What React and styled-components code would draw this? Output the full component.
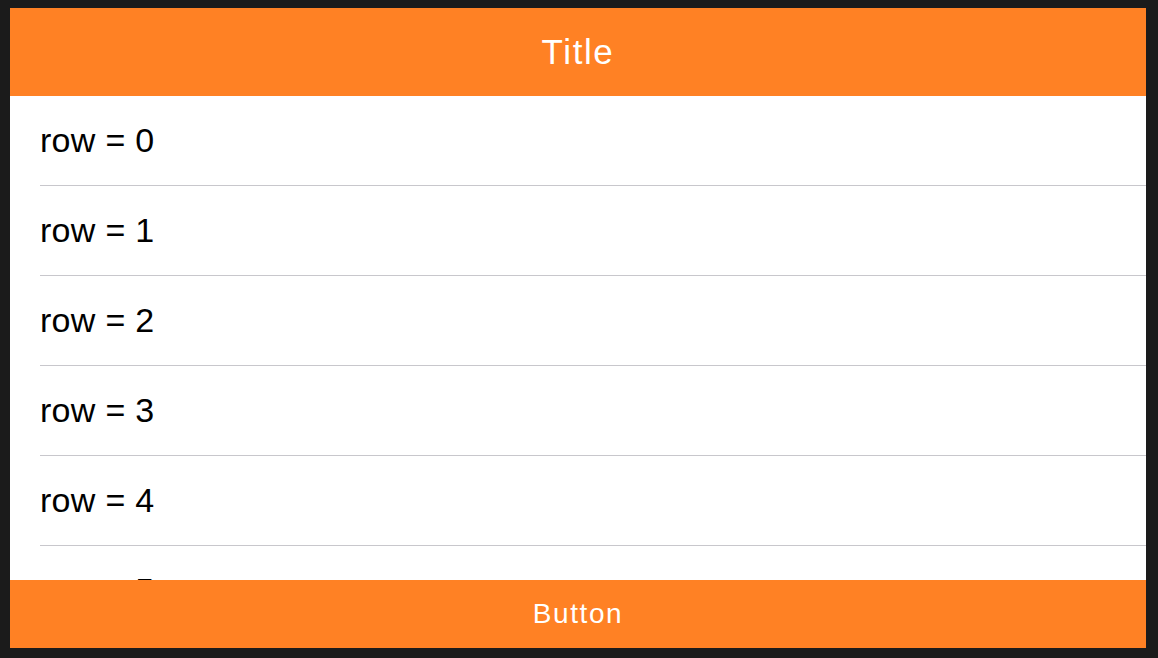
import React from 'react'
import styled, { createGlobalStyle } from 'styled-components'

const GlobalStyle = createGlobalStyle`
  html, body {
    margin: 0;
    padding: 0;
    background: #1b1b1b;
  }
  body {
    font-family: "Liberation Sans", Arial, sans-serif;
  }
`

const Frame = styled.div`
  box-sizing: border-box;
  width: 1158px;
  height: 658px;
  padding: 8px 12px 10px 10px;
  background: #1b1b1b;
`

const Screen = styled.div`
  display: flex;
  flex-direction: column;
  height: 100%;
  background: #fff;
  overflow: hidden;
`

const Header = styled.div`
  flex: 0 0 88px;
  display: flex;
  align-items: center;
  justify-content: center;
  background: #ff8124;
  color: #fff;
  font-size: 35px;
  letter-spacing: 1.6px;
`

const List = styled.div`
  flex: 1;
  overflow: hidden;
`

const Row = styled.div`
  box-sizing: border-box;
  height: 90px;
  margin-left: 30px;
  display: flex;
  align-items: center;
  border-bottom: 1px solid #c8c7cc;
  color: #000;
  font-size: 34px;
  letter-spacing: 0.3px;
`

const BottomButton = styled.button`
  flex: 0 0 68px;
  border: none;
  background: #ff8124;
  color: #fff;
  font-family: inherit;
  font-size: 28px;
  letter-spacing: 1.6px;
  padding: 0;
  cursor: pointer;
`

const rows = [0, 1, 2, 3, 4, 5]

export default function App() {
  return (
    <Frame>
      <GlobalStyle />
      <Screen>
        <Header>Title</Header>
        <List>
          {rows.map(n => (
            <Row key={n}>row = {n}</Row>
          ))}
        </List>
        <BottomButton>Button</BottomButton>
      </Screen>
    </Frame>
  )
}
